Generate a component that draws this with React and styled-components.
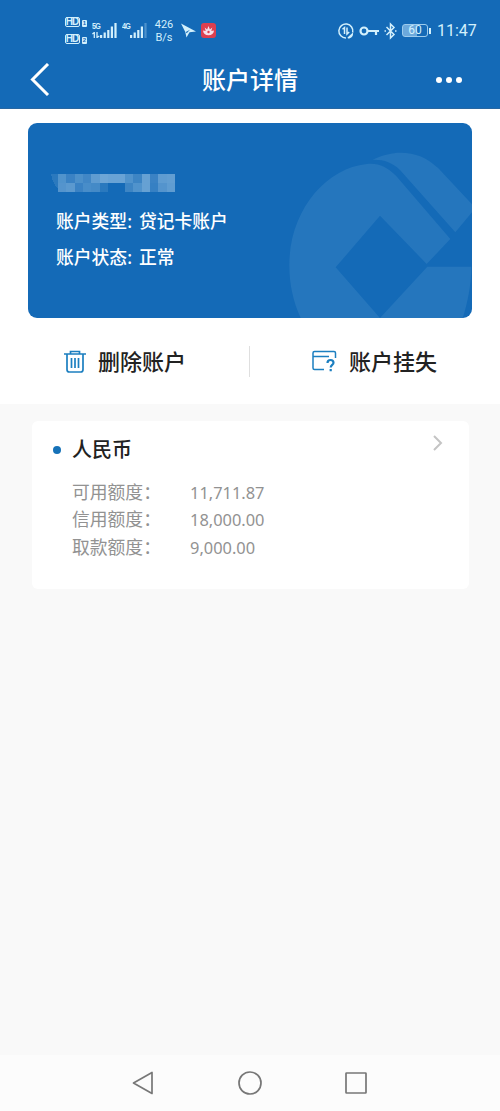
import styled, { createGlobalStyle } from 'styled-components'

const color = {
  primary: '#146ab7',
  mark: '#2576bd',
  icon: '#1c7fc0',
  status: '#d3f0fc',
  text: '#222222',
  muted: '#929292',
  page: '#f9f9f9',
  nav: '#fcfcfc',
  navIcon: '#777777'
}

const GlobalStyle = createGlobalStyle`
* {
  box-sizing: border-box;
}

body {
  margin: 0;
  background: ${color.page};
  font-family: 'Noto Sans', 'Noto Sans CJK SC', sans-serif;
}

svg {
  display: block;
  flex-shrink: 0;
}
`

const Screen = styled.div`
display: flex;
flex-direction: column;
width: 500px;
height: 1111px;
overflow: hidden;
`

const Header = styled.header`
height: 109px;
flex-shrink: 0;
background: ${color.primary};
border-bottom: 1px solid #2867a2;
`

const StatusBar = styled.div`
display: flex;
align-items: center;
justify-content: space-between;
height: 52px;
padding: 9px 22px 0 65px;
color: ${color.status};
`

const StatusGroup = styled.div`
display: flex;
align-items: center;
`

const HdList = styled.div`
display: flex;
flex-direction: column;
gap: 7px;
width: 27px;
`

const HdRow = styled.div`
display: flex;
align-items: flex-end;
gap: 2px;
`

const HdBadge = styled.span`
width: 15px;
height: 10px;
border-radius: 2px;
border: 1px solid ${color.status};
font: bold 10px/8px 'Liberation Sans', sans-serif;
text-align: center;
letter-spacing: -1px;
text-indent: -1px;
`

const SimBadge = styled.span`
width: 5px;
height: 7px;
border-radius: 1px;
background: ${color.status};
color: ${color.primary};
font: bold 6px/7px 'Liberation Sans', sans-serif;
text-align: center;
`

const Signal = styled.div`
display: flex;
flex-direction: column;
width: ${(props) => props.$width}px;
margin: 0 0 1px ${(props) => props.$left}px;
`

const SignalType = styled.span`
height: 8px;
font: bold 9px/8px 'Liberation Sans Narrow', 'Liberation Sans', sans-serif;
letter-spacing: -0.9px;
transform: scaleX(0.8);
transform-origin: left;
`

const SignalRow = styled.div`
display: flex;
align-items: flex-end;
height: 8px;
padding-left: ${(props) => props.$left}px;
`

const Speed = styled.div`
width: 24px;
margin: 0 4px 0 5px;
font: 11px/13px Roboto, sans-serif;
text-align: center;
`

const AppIcon = styled.svg`
margin-left: 4px;
`

const Battery = styled.span`
width: 26px;
height: 13px;
margin-left: 5px;
border: 1px solid #9ccbed;
border-radius: 3px;
background: linear-gradient(90deg, #6ca9dc 60%, ${color.primary} 60%);
font: 12px/11px Roboto, sans-serif;
text-align: center;
`

const BatteryCap = styled.span`
width: 2px;
height: 6px;
margin-left: 1px;
background: ${color.status};
`

const Clock = styled.span`
width: 41px;
margin-left: 6px;
font: 16px/20px Roboto, sans-serif;
white-space: nowrap;
`

const TitleBar = styled.div`
display: grid;
grid-template-columns: 70px 1fr 70px;
align-items: center;
height: 55px;
padding: 0 30px;
`

const Title = styled.h1`
margin: 0;
color: #fff;
font-size: 24px;
font-weight: 500;
line-height: 36px;
text-align: center;
`

const MoreDots = styled.div`
display: flex;
justify-content: flex-end;
gap: 4px;
padding-right: 8px;

span {
  width: 6px;
  height: 6px;
  border-radius: 50%;
  background: #fff;
}
`

const Top = styled.section`
height: 295px;
flex-shrink: 0;
padding: 14px 28px 0;
background: #fff;
`

const Card = styled.div`
position: relative;
height: 195px;
padding: 51px 28px 0;
border-radius: 9px;
background: ${color.primary};
color: #fff;
overflow: hidden;
`

const Watermark = styled.svg`
position: absolute;
right: 0;
bottom: 0;
`

const CardLine = styled.p`
display: flex;
gap: 7px;
margin: 0;
font-size: 17.8px;
font-weight: 500;
line-height: 36px;
`

const MaskedNumber = styled.svg`
margin: 0 0 11px -5px;
`

const Actions = styled.div`
display: flex;
align-items: center;
height: 86px;
`

const Action = styled.div`
display: flex;
align-items: center;
gap: 12px;
width: 221px;
padding-left: ${(props) => props.$left}px;
color: ${color.text};
font-size: 22px;
font-weight: 500;
line-height: 30px;
`

const Divider = styled.span`
width: 1px;
height: 31px;
background: #dfdfdf;
`

const Panel = styled.section`
height: 168px;
margin: 17px 31px 0 32px;
padding: 13px 26px 0 21px;
border-radius: 6px;
background: #fff;
`

const PanelTop = styled.div`
display: flex;
align-items: center;
height: 32px;
margin-bottom: 13px;

h2 {
  flex: 1;
  margin: 0 0 0 11px;
  color: ${color.text};
  font-size: 20px;
  font-weight: 500;
  line-height: 30px;
}

svg {
  margin-bottom: 14px;
}
`

const Bullet = styled.span`
width: 8px;
height: 8px;
border-radius: 50%;
background: #1672b8;
`

const Amount = styled.div`
display: flex;
height: 27.3px;
padding-left: 19px;
color: ${color.muted};
font-size: 17.8px;
line-height: 27px;
`

const AmountLabel = styled.span`
width: 118px;
`

const AmountValue = styled.span`
font-size: 16.4px;
`

const NavBar = styled.nav`
display: flex;
align-items: center;
justify-content: space-between;
height: 56px;
margin-top: auto;
padding: 0 132px;
background: ${color.nav};
`

// opacity of each block, row by row
const maskBlocks = [
  [0.32, 0.2, 0.3, 0.24, 0.4, 0.48, 0.46, 0.46, 0.32, 0.22, 0.44, 0.2, 0.4, 0.42],
  [0.34, 0.38, 0.2, 0.28, 0.26, 0.12, 0, 0, 0.22, 0.32, 0.44, 0.18, 0.34, 0.4]
]

const amounts = [
  { label: '可用额度：', value: '11,711.87' },
  { label: '信用额度：', value: '18,000.00' },
  { label: '取款额度：', value: '9,000.00' }
]

function Bars({ faded }) {
  return (
    <svg width="17" height="15" viewBox="0 0 17 15" fill={color.status}>
      <rect x="0" y="12" width="2.2" height="3" />
      <rect x="3.6" y="9.5" width="2.2" height="5.5" />
      <rect x="7.2" y="7" width="2.2" height="8" />
      <rect x="10.8" y="3.5" width="2.2" height="11.5" />
      <rect x="14.4" y="0" width="2.2" height="15" opacity={faded ? 0.3 : 1} />
    </svg>
  )
}

function SignalBlock({ type }) {
  const isMain = type === '5G'
  return (
    <Signal $width={isMain ? 26 : 25} $left={isMain ? 0 : 4}>
      <SignalType>{type}</SignalType>
      <SignalRow $left={isMain ? 0 : 8}>
        {isMain && (
          <svg width="8" height="6" viewBox="0 0 8 6" fill="none" stroke={color.status} strokeWidth="1.3">
            <path d="M.3 2 2.3.5V6M5 0v5.500L7.300 4" />
          </svg>
        )}
        <Bars faded={!isMain} />
      </SignalRow>
    </Signal>
  )
}

function Status() {
  return (
    <StatusBar>
      <StatusGroup>
        <HdList>
          <HdRow><HdBadge>HD</HdBadge><SimBadge>1</SimBadge></HdRow>
          <HdRow><HdBadge>HD</HdBadge><SimBadge>2</SimBadge></HdRow>
        </HdList>
        <SignalBlock type="5G" />
        <SignalBlock type="4G" />
        <Speed>426 B/s</Speed>
        <svg width="17" height="15" viewBox="0 0 17 15" fill={color.status}>
          <path d="M1 0.500 16 8.500 9.500 9.300 6.500 14.500 5.300 9z" />
          <path d="m5.800 9 4.200-2.200-3.300 3.400z" fill={color.primary} />
        </svg>
        <AppIcon width="15" height="15" viewBox="0 0 15 15">
          <rect width="15" height="15" rx="3" fill="#dc3f50" />
          <path
            fill="#f5dfea"
            d="M2 7.500 4.700 8 3.700 4.600l2.400 1.900L7.500 3l1.400 3.500 2.400-1.900L10.300 8l2.700-.5c-.2 3-2.300 4.700-5.500 4.700S2.200 10.500 2 7.500z"
          />
          <circle cx="7.5" cy="9" r="1.2" fill="#dc3f50" />
        </AppIcon>
      </StatusGroup>
      <StatusGroup>
        <svg width="47" height="18" viewBox="0 0 47 18" fill="none" stroke={color.status} strokeWidth="1.5">
          <path d="M15.700 10.500A7 7 0 1 0 9 16" />
          <path d="M5.500 7.200 7.500 5.500V12M10 5.500V12l2.200-2" />
          <path d="m10.500 15.500 5.500-5c.5 3.500-1.500 6-5 6z" fill={color.status} stroke="none" />
          <g strokeWidth="2.200">
            <circle cx="27" cy="9" r="3.500" />
            <path d="M30.500 9H42M39 9v4" />
          </g>
        </svg>
        <svg width="13" height="18" viewBox="0 0 13 18" fill="none" stroke={color.status} strokeWidth="1.5">
          <path d="m2.500 5 7.500 7.500L6.500 16V2L10 5.500 2.500 13" />
          <path d="M.5 9H2M11 9h1.500" />
        </svg>
        <Battery>60</Battery>
        <BatteryCap />
        <Clock>11:47</Clock>
      </StatusGroup>
    </StatusBar>
  )
}

function AccountCard() {
  return (
    <Card>
      <Watermark width="183" height="166" viewBox="57 111 549 498" fill={color.mark}>
        <path d="M92 609C70 560 58 510 58 450 58 290 165 160 290 147c35-4 60 8 88 35l163 190-71 75-140-145-133 155 133 152z" />
        <path d="M330 609 472 455h132c0 55-12 110-26 154z" />
        <path d="M308 134c32-15 60-21 82-21 47 0 82 15 115 47l101 108v24l-50 60-166-187c-22-23-50-32-82-31z" />
      </Watermark>
      <MaskedNumber width="124" height="18" viewBox="0 0 124 18" shapeRendering="crispEdges">
        <path d="M0 0h7v14C4 12 1 7 0 0z" fill="#fff" opacity="0.1" />
        {maskBlocks.map((row, y) => row.map((opacity, x) => (
          <rect key={`${x}-${y}`} x={7 + x * 8.35} y={y * 9} width="8.35" height="9" fill="#d0e8f8" opacity={opacity} />
        )))}
      </MaskedNumber>
      <CardLine><span>账户类型:</span><span>贷记卡账户</span></CardLine>
      <CardLine><span>账户状态:</span><span>正常</span></CardLine>
    </Card>
  )
}

function App() {
  return (
    <Screen>
      <GlobalStyle />
      <Header>
        <Status />
        <TitleBar>
          <svg width="20" height="33" viewBox="0 0 20 33" fill="none" stroke="#fff" strokeWidth="3">
            <path d="M18 1 2.500 16.500 18 32" />
          </svg>
          <Title>账户详情</Title>
          <MoreDots><span /><span /><span /></MoreDots>
        </TitleBar>
      </Header>

      <Top>
        <AccountCard />
        <Actions>
          <Action $left={36}>
            <svg width="22" height="23" viewBox="0 0 22 23" fill="none" stroke={color.icon} strokeWidth="1.7">
              <path d="M0 4h22M6.500 4V1.500h9V4M3 4v15.500C3 21 3.800 22 5.300 22h11.400c1.500 0 2.300-1 2.300-2.500V4M7.500 8v10M11 8v10M14.500 8v10" />
            </svg>
            删除账户
          </Action>
          <Divider />
          <Action $left={62}>
            <svg width="25" height="22" viewBox="0 0 25 22" fill="none" stroke={color.icon} strokeWidth="1.5">
              <path d="M12 19.500H2.500c-1 0-1.500-.5-1.500-1.500V3c0-1 .5-1.500 1.500-1.500H22c1 0 1.500.5 1.500 1.500v5M1 6.500h16" />
              <path d="M15.500 13c0-2 1.200-3 3-3s3 1 3 2.700c0 2.200-2.800 2.300-2.800 4.800M18.700 19v2.300" strokeWidth="2.2" />
            </svg>
            账户挂失
          </Action>
        </Actions>
      </Top>

      <Panel>
        <PanelTop>
          <Bullet />
          <h2>人民币</h2>
          <svg width="10" height="16" viewBox="0 0 10 16" fill="none" stroke="#c4c4c4" strokeWidth="2">
            <path d="m1 1 7 7-7 7" />
          </svg>
        </PanelTop>
        {amounts.map(({ label, value }) => (
          <Amount key={label}>
            <AmountLabel>{label}</AmountLabel>
            <AmountValue>{value}</AmountValue>
          </Amount>
        ))}
      </Panel>

      <NavBar>
        <svg width="24" height="24" viewBox="0 0 24 24" fill="none" stroke={color.navIcon} strokeWidth="1.7">
          <path d="M20 1.500v21L1.500 12z" strokeLinejoin="round" />
        </svg>
        <svg width="24" height="24" viewBox="0 0 24 24" fill="none" stroke={color.navIcon} strokeWidth="1.7">
          <circle cx="12" cy="12" r="11" />
        </svg>
        <svg width="24" height="24" viewBox="0 0 24 24" fill="none" stroke={color.navIcon} strokeWidth="1.7">
          <rect x="2" y="2" width="20" height="20" rx="0.5" />
        </svg>
      </NavBar>
    </Screen>
  )
}

export default App
